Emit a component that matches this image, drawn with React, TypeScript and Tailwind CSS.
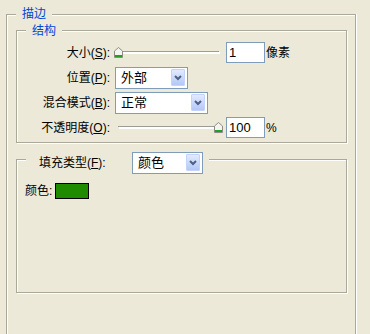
import type { ReactNode } from "react";

const font = "font-[family-name:'Liberation_Sans','Noto_Sans_CJK_SC',sans-serif]";

// etched group box frame: gray line with a white line beside it
const frame =
  "border border-[#ACA899] shadow-[1px_1px_0_#fff,inset_1px_1px_0_#fff]";

const Key = ({ label, k }: { label: string; k: string }) => (
  <span className="whitespace-nowrap">
    {label}(<span className="underline underline-offset-[1px]">{k}</span>):
  </span>
);

const Thumb = ({ className }: { className?: string }) => (
  <svg width="9" height="11" viewBox="0 0 9 11" className={className}>
    <path
      d="M0.5 10.5V4L4.5 0.5L8.5 4V10.5Z"
      fill="#F4F4F0"
      stroke="#8C8C84"
    />
    <rect x="1" y="8" width="7" height="2" fill="#21A121" />
  </svg>
);

const Slider = ({ atEnd }: { atEnd?: boolean }) => (
  <div className="relative w-[110px] h-[11px] -ml-px">
    <div className="absolute left-[4px] w-[101px] top-[4px] h-px bg-[#9C9C94]" />
    <div className="absolute left-[5px] w-[101px] top-[5px] h-[2px] bg-white" />
    <Thumb className={atEnd ? "absolute top-0 left-[100px]" : "absolute top-0 left-0"} />
  </div>
);

const NumBox = ({ value }: { value: string }) => (
  <div className="w-[39px] h-[21px] border border-[#7F9DB9] bg-white flex items-center pl-[2px] text-[13px] font-[family-name:'Liberation_Sans',sans-serif]">
    {value}
  </div>
);

const Combo = ({ value, width }: { value: string; width: string }) => (
  <div className={`${width} h-[22px] border border-[#7F9DB9] bg-white flex items-center`}>
    <span className="flex-1 pl-[5px] text-[13px] leading-none">{value}</span>
    <span className="w-[14px] h-[17px] mr-[2px] rounded-[1px] border border-[#C3D3FD] bg-gradient-to-b from-[#E2EAFE] to-[#B4C8F6] flex items-center justify-center">
      <svg width="8" height="6" viewBox="0 0 8 6">
        <polyline points="1,1 4,4 7,1" fill="none" stroke="#4D6185" strokeWidth="2" />
      </svg>
    </span>
  </div>
);

const Row = ({ label, children }: { label: ReactNode; children: ReactNode }) => (
  <div className="flex items-center h-[25px]">
    <div className="w-[93px] text-right">{label}</div>
    <div className="ml-[5px] flex items-center">{children}</div>
  </div>
);

export default function App() {
  return (
    <div className={`w-[370px] h-[334px] overflow-hidden bg-[#ECE9D8] pt-[14px] text-[12px] text-black ${font}`}>
      {/* 描边 - runs past the bottom of the window */}
      <div className="ml-[6px] w-[350px] h-[400px] border-t border-l border-r border-[#ACA899] shadow-[1px_0_0_#fff,inset_1px_1px_0_#fff]">
        <div className="-mt-[7px] ml-[9px] px-[6px] w-fit bg-[#ECE9D8] leading-[12px] text-[#0046D5]">
          描边
        </div>

        {/* 结构 */}
        <div className={`mt-[10px] ml-[9px] w-[331px] pb-[2px] ${frame}`}>
          <div className="-mt-[6px] ml-[9px] px-[6px] w-fit bg-[#ECE9D8] leading-[12px] text-[#0046D5]">
            结构
          </div>
          <div className="mt-[3px]">
            <Row label={<Key label="大小" k="S" />}>
              <Slider />
              <div className="ml-[2px]">
                <NumBox value="1" />
              </div>
              <span className="ml-px">像素</span>
            </Row>
            <Row label={<Key label="位置" k="P" />}>
              <Combo value="外部" width="w-[73px]" />
            </Row>
            <Row label={<Key label="混合模式" k="B" />}>
              <Combo value="正常" width="w-[93px]" />
            </Row>
            <Row label={<Key label="不透明度" k="O" />}>
              <Slider atEnd />
              <div className="ml-[2px]">
                <NumBox value="100" />
              </div>
              <span className="ml-px">%</span>
            </Row>
          </div>
        </div>

        {/* 填充 */}
        <div className={`mt-[16px] ml-[9px] w-[331px] h-[134px] ${frame}`}>
          <div className="-mt-[8px] ml-[9px] pl-[13px] pr-[6px] w-fit h-[21px] flex items-center bg-[#ECE9D8]">
            <span className="w-[69px]">
              <Key label="填充类型" k="F" />
            </span>
            <div className="ml-[24px]">
              <Combo value="颜色" width="w-[71px]" />
            </div>
          </div>
          <div className="mt-[10px] pl-[8px] flex items-center h-[16px]">
            <span>颜色:</span>
            <div className="ml-[3px] w-[34px] h-[16px] border border-black bg-[#1F8B00]" />
          </div>
        </div>
      </div>
    </div>
  );
}
